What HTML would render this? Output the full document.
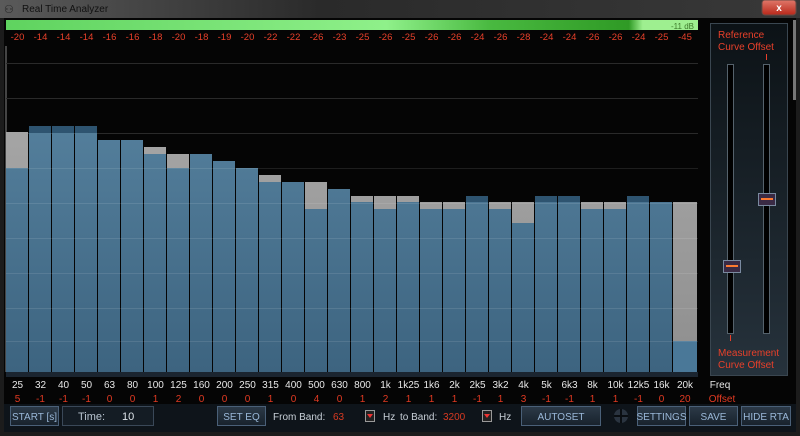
<!DOCTYPE html>
<html><head><meta charset="utf-8"><style>
html,body{margin:0;padding:0;background:#1a1a1a;}
svg{display:block;font-family:"Liberation Sans",sans-serif;}
</style></head><body>
<svg width="800" height="436" viewBox="0 0 800 436" xmlns="http://www.w3.org/2000/svg">
<defs>
<linearGradient id="tb" x1="0" y1="0" x2="1" y2="0"><stop offset="0" stop-color="#5a5a5a"/><stop offset="0.4" stop-color="#2a2a2a"/><stop offset="1" stop-color="#383838"/></linearGradient>
<linearGradient id="gr" x1="0" y1="0" x2="1" y2="0"><stop offset="0" stop-color="#5fd35f"/><stop offset="0.55" stop-color="#8ff08a"/><stop offset="0.7" stop-color="#49b940"/><stop offset="0.9" stop-color="#2f9a25"/><stop offset="0.92" stop-color="#9eef90"/><stop offset="1" stop-color="#9eef90"/></linearGradient>
<linearGradient id="bl" x1="0" y1="120" x2="0" y2="372" gradientUnits="userSpaceOnUse"><stop offset="0" stop-color="#547f9c"/><stop offset="1" stop-color="#3d6480"/></linearGradient>
<linearGradient id="gy" x1="0" y1="120" x2="0" y2="372" gradientUnits="userSpaceOnUse"><stop offset="0" stop-color="#a6a6a6"/><stop offset="1" stop-color="#8e8e8e"/></linearGradient>
<linearGradient id="pn" x1="0" y1="0" x2="0" y2="1"><stop offset="0" stop-color="#0c1216"/><stop offset="1" stop-color="#26323c"/></linearGradient>
<linearGradient id="bt" x1="0" y1="0" x2="0" y2="1"><stop offset="0" stop-color="#2c3a48"/><stop offset="1" stop-color="#18222c"/></linearGradient>
<linearGradient id="cl" x1="0" y1="0" x2="0" y2="1"><stop offset="0" stop-color="#e0786a"/><stop offset="1" stop-color="#b8281a"/></linearGradient>
</defs>
<rect width="800" height="436" fill="#1c1c1c"/>
<rect width="800" height="18" fill="url(#tb)"/>
<text x="22" y="12" font-size="10" fill="#111">Real Time Analyzer</text>
<text x="4" y="13" font-size="11" fill="#222">⚇</text>
<rect x="762" y="0" width="34" height="15" rx="3" fill="url(#cl)" stroke="#6a4a44"/>
<text x="779" y="11" font-size="10" fill="#fff" text-anchor="middle" font-weight="bold">x</text>
<rect x="4" y="18" width="792" height="414" fill="#050505"/>
<rect x="6" y="20" width="692" height="10" fill="url(#gr)"/>
<text x="694" y="29" font-size="8" fill="#3d7a2a" text-anchor="end">-11 dB</text>
<g font-size="9.5" fill="#e8402a" text-anchor="middle">
<text x="17.5" y="40">-20</text><text x="40.5" y="40">-14</text><text x="63.5" y="40">-14</text><text x="86.5" y="40">-14</text><text x="109.5" y="40">-16</text><text x="132.5" y="40">-16</text><text x="155.5" y="40">-18</text><text x="178.5" y="40">-20</text><text x="201.5" y="40">-18</text><text x="224.5" y="40">-19</text><text x="247.5" y="40">-20</text><text x="270.5" y="40">-22</text><text x="293.5" y="40">-22</text><text x="316.5" y="40">-26</text><text x="339.5" y="40">-23</text><text x="362.5" y="40">-25</text><text x="385.5" y="40">-26</text><text x="408.5" y="40">-25</text><text x="431.5" y="40">-26</text><text x="454.5" y="40">-26</text><text x="477.5" y="40">-24</text><text x="500.5" y="40">-26</text><text x="523.5" y="40">-28</text><text x="546.5" y="40">-24</text><text x="569.5" y="40">-24</text><text x="592.5" y="40">-26</text><text x="615.5" y="40">-26</text><text x="638.5" y="40">-24</text><text x="661.5" y="40">-25</text><text x="685" y="40">-45</text>
</g>
<rect x="5" y="46" width="2" height="326" fill="#444"/>
<g stroke="#2a2a2a" stroke-width="1">
<line x1="6" y1="63.5" x2="698" y2="63.5"/><line x1="6" y1="98.5" x2="698" y2="98.5"/><line x1="6" y1="133.5" x2="698" y2="133.5"/>
</g>
<g id="bars">
<rect x="6" y="132" width="22" height="240" fill="url(#gy)"/><rect x="6" y="168" width="22" height="204" fill="url(#bl)"/>
<rect x="29" y="126" width="22" height="246" fill="url(#bl)"/><rect x="29" y="126" width="22" height="7" fill="#2e5470"/>
<rect x="52" y="126" width="22" height="246" fill="url(#bl)"/><rect x="52" y="126" width="22" height="7" fill="#2e5470"/>
<rect x="75" y="126" width="22" height="246" fill="url(#bl)"/><rect x="75" y="126" width="22" height="7" fill="#2e5470"/>
<rect x="98" y="140" width="22" height="232" fill="url(#bl)"/>
<rect x="121" y="140" width="22" height="232" fill="url(#bl)"/>
<rect x="144" y="147" width="22" height="225" fill="url(#gy)"/><rect x="144" y="154" width="22" height="218" fill="url(#bl)"/>
<rect x="167" y="154" width="22" height="218" fill="url(#gy)"/><rect x="167" y="168" width="22" height="204" fill="url(#bl)"/>
<rect x="190" y="154" width="22" height="218" fill="url(#bl)"/>
<rect x="213" y="161" width="22" height="211" fill="url(#bl)"/>
<rect x="236" y="168" width="22" height="204" fill="url(#bl)"/>
<rect x="259" y="175" width="22" height="197" fill="url(#gy)"/><rect x="259" y="182" width="22" height="190" fill="url(#bl)"/>
<rect x="282" y="182" width="22" height="190" fill="url(#bl)"/>
<rect x="305" y="182" width="22" height="190" fill="url(#gy)"/><rect x="305" y="209" width="22" height="163" fill="url(#bl)"/>
<rect x="328" y="189" width="22" height="183" fill="url(#bl)"/>
<rect x="351" y="196" width="22" height="176" fill="url(#gy)"/><rect x="351" y="202" width="22" height="170" fill="url(#bl)"/>
<rect x="374" y="196" width="22" height="176" fill="url(#gy)"/><rect x="374" y="209" width="22" height="163" fill="url(#bl)"/>
<rect x="397" y="196" width="22" height="176" fill="url(#gy)"/><rect x="397" y="202" width="22" height="170" fill="url(#bl)"/>
<rect x="420" y="202" width="22" height="170" fill="url(#gy)"/><rect x="420" y="209" width="22" height="163" fill="url(#bl)"/>
<rect x="443" y="202" width="22" height="170" fill="url(#gy)"/><rect x="443" y="209" width="22" height="163" fill="url(#bl)"/>
<rect x="466" y="196" width="22" height="176" fill="url(#bl)"/><rect x="466" y="196" width="22" height="6" fill="#2e5470"/>
<rect x="489" y="202" width="22" height="170" fill="url(#gy)"/><rect x="489" y="209" width="22" height="163" fill="url(#bl)"/>
<rect x="512" y="202" width="22" height="170" fill="url(#gy)"/><rect x="512" y="223" width="22" height="149" fill="url(#bl)"/>
<rect x="535" y="196" width="22" height="176" fill="url(#bl)"/><rect x="535" y="196" width="22" height="6" fill="#2e5470"/>
<rect x="558" y="196" width="22" height="176" fill="url(#bl)"/><rect x="558" y="196" width="22" height="6" fill="#2e5470"/>
<rect x="581" y="202" width="22" height="170" fill="url(#gy)"/><rect x="581" y="209" width="22" height="163" fill="url(#bl)"/>
<rect x="604" y="202" width="22" height="170" fill="url(#gy)"/><rect x="604" y="209" width="22" height="163" fill="url(#bl)"/>
<rect x="627" y="196" width="22" height="176" fill="url(#bl)"/><rect x="627" y="196" width="22" height="6" fill="#2e5470"/>
<rect x="650" y="202" width="22" height="170" fill="url(#bl)"/>
<rect x="673" y="202" width="24" height="170" fill="url(#gy)"/><rect x="673" y="341" width="24" height="31" fill="#4a7898"/>
</g>
<g stroke="#ffffff" stroke-opacity="0.1" stroke-width="1">
<line x1="6" y1="168.5" x2="698" y2="168.5"/><line x1="6" y1="203.5" x2="698" y2="203.5"/><line x1="6" y1="238.5" x2="698" y2="238.5"/><line x1="6" y1="273.5" x2="698" y2="273.5"/><line x1="6" y1="308.5" x2="698" y2="308.5"/><line x1="6" y1="341.5" x2="698" y2="341.5"/>
</g>
<rect x="6" y="372" width="692" height="5" fill="#1b2530"/>
<g font-size="10" fill="#e8e8e8" text-anchor="middle">
<text x="17.5" y="388">25</text><text x="40.5" y="388">32</text><text x="63.5" y="388">40</text><text x="86.5" y="388">50</text><text x="109.5" y="388">63</text><text x="132.5" y="388">80</text><text x="155.5" y="388">100</text><text x="178.5" y="388">125</text><text x="201.5" y="388">160</text><text x="224.5" y="388">200</text><text x="247.5" y="388">250</text><text x="270.5" y="388">315</text><text x="293.5" y="388">400</text><text x="316.5" y="388">500</text><text x="339.5" y="388">630</text><text x="362.5" y="388">800</text><text x="385.5" y="388">1k</text><text x="408.5" y="388">1k25</text><text x="431.5" y="388">1k6</text><text x="454.5" y="388">2k</text><text x="477.5" y="388">2k5</text><text x="500.5" y="388">3k2</text><text x="523.5" y="388">4k</text><text x="546.5" y="388">5k</text><text x="569.5" y="388">6k3</text><text x="592.5" y="388">8k</text><text x="615.5" y="388">10k</text><text x="638.5" y="388">12k5</text><text x="661.5" y="388">16k</text><text x="685" y="388">20k</text><text x="720" y="388">Freq</text>
</g>
<g font-size="10" fill="#e23a22" text-anchor="middle">
<text x="17.5" y="402">5</text><text x="40.5" y="402">-1</text><text x="63.5" y="402">-1</text><text x="86.5" y="402">-1</text><text x="109.5" y="402">0</text><text x="132.5" y="402">0</text><text x="155.5" y="402">1</text><text x="178.5" y="402">2</text><text x="201.5" y="402">0</text><text x="224.5" y="402">0</text><text x="247.5" y="402">0</text><text x="270.5" y="402">1</text><text x="293.5" y="402">0</text><text x="316.5" y="402">4</text><text x="339.5" y="402">0</text><text x="362.5" y="402">1</text><text x="385.5" y="402">2</text><text x="408.5" y="402">1</text><text x="431.5" y="402">1</text><text x="454.5" y="402">1</text><text x="477.5" y="402">-1</text><text x="500.5" y="402">1</text><text x="523.5" y="402">3</text><text x="546.5" y="402">-1</text><text x="569.5" y="402">-1</text><text x="592.5" y="402">1</text><text x="615.5" y="402">1</text><text x="638.5" y="402">-1</text><text x="661.5" y="402">0</text><text x="685" y="402">20</text><text x="722" y="402">Offset</text>
</g>
<!-- right panel -->
<rect x="710.5" y="23.5" width="77" height="352" fill="url(#pn)" stroke="#3a4650"/>
<g font-size="10" fill="#e8402a">
<text x="718" y="38">Reference</text><text x="718" y="50">Curve Offset</text>
<text x="718" y="356">Measurement</text><text x="718" y="368">Curve Offset</text>
</g>
<rect x="766" y="54" width="1" height="6" fill="#e8402a"/>
<rect x="730" y="335" width="1" height="6" fill="#e8402a"/>
<rect x="727.5" y="64.5" width="6" height="269" fill="#000" stroke="#55626c"/>
<rect x="763.5" y="64.5" width="6" height="269" fill="#000" stroke="#55626c"/>
<rect x="723.5" y="260.5" width="17" height="12" fill="#3a2a44" stroke="#7a8aa0"/>
<rect x="726" y="265" width="12" height="2" fill="#ff7a30"/>
<rect x="758.5" y="193.5" width="17" height="12" fill="#3a2a44" stroke="#7a8aa0"/>
<rect x="761" y="198" width="12" height="2" fill="#ff7a30"/>
<rect x="793" y="20" width="3" height="80" fill="#777"/>
<!-- bottom buttons -->
<rect x="4" y="404" width="792" height="28" fill="#0e141a"/>
<g font-size="10">
<rect x="10.5" y="406.5" width="48" height="19" fill="url(#bt)" stroke="#4a6078"/><text x="34.5" y="420" fill="#9ab8d8" text-anchor="middle">START [s]</text>
<rect x="62.5" y="406.5" width="91" height="19" fill="#141c24" stroke="#3a4858"/><text x="78" y="420" fill="#b8c4d0" font-size="11">Time:</text><text x="122" y="420" fill="#dde4ea" font-size="11">10</text>
<rect x="217.5" y="406.5" width="48" height="19" fill="url(#bt)" stroke="#4a6078"/><text x="241.5" y="420" fill="#9ab8d8" text-anchor="middle">SET EQ</text>
<text x="273" y="420" fill="#c8d0d8">From Band:</text><text x="333" y="420" fill="#d83a22">63</text>
<rect x="365.5" y="410.5" width="9" height="11" fill="#222" stroke="#999"/><path d="M367 414 L373 414 L370 418 Z" fill="#e33"/>
<text x="383" y="420" fill="#c8d0d8">Hz</text><text x="400" y="420" fill="#c8d0d8">to Band:</text><text x="443" y="420" fill="#d83a22">3200</text>
<rect x="482.5" y="410.5" width="9" height="11" fill="#222" stroke="#999"/><path d="M484 414 L490 414 L487 418 Z" fill="#e33"/>
<text x="499" y="420" fill="#c8d0d8">Hz</text>
<rect x="521.5" y="406.5" width="79" height="19" fill="url(#bt)" stroke="#4a6078"/><text x="561" y="420" fill="#9ab8d8" text-anchor="middle">AUTOSET</text>
<circle cx="621" cy="416" r="7" fill="#2a3440"/><path d="M614 416 H628 M621 409 V423" stroke="#0a0e12" stroke-width="2"/>
<rect x="637.5" y="406.5" width="48" height="19" fill="url(#bt)" stroke="#4a6078"/><text x="661.5" y="420" fill="#9ab8d8" text-anchor="middle">SETTINGS</text>
<rect x="689.5" y="406.5" width="48" height="19" fill="url(#bt)" stroke="#4a6078"/><text x="713.5" y="420" fill="#9ab8d8" text-anchor="middle">SAVE</text>
<rect x="741.5" y="406.5" width="49" height="19" fill="url(#bt)" stroke="#4a6078"/><text x="766" y="420" fill="#9ab8d8" text-anchor="middle">HIDE RTA</text>
</g>
</svg>
</body></html>
